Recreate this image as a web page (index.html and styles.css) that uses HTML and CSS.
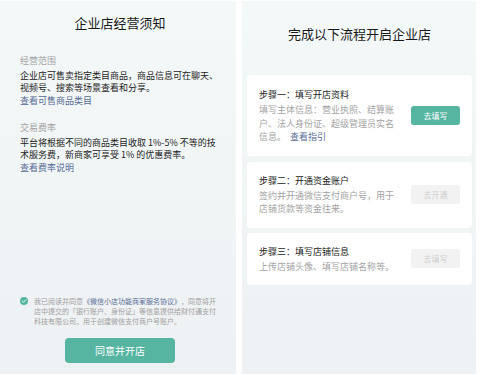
FILE: index.html
```html
<!DOCTYPE html>
<html lang="zh-CN">
<head>
  <meta charset="UTF-8" />
  <title>企业店</title>
  <link rel="stylesheet" href="styles.css">
</head>
<body>

<div class="screens">
  <div class="screen notice">
    <h1 class="screen-title">企业店经营须知</h1>

    <div class="section">
      <div class="section-label">经营范围</div>
      <p class="section-text">企业店可售卖指定类目商品，商品信息可在聊天、视频号、搜索等场景查看和分享。</p>
      <a class="link">查看可售商品类目</a>
    </div>

    <div class="section">
      <div class="section-label">交易费率</div>
      <p class="section-text">平台将根据不同的商品类目收取 1%-5% 不等的技术服务费，新商家可享受 1% 的优惠费率。</p>
      <a class="link">查看费率说明</a>
    </div>

    <div class="agree">
      <span class="check">
        <svg viewBox="0 0 10 10" width="8" height="8">
          <circle cx="5" cy="5" r="5" fill="#55b5a1" />
          <path d="M2.8 5.1 L4.4 6.6 L7.3 3.6" fill="none" stroke="#fff" stroke-width="1.1" stroke-linecap="round" stroke-linejoin="round" />
        </svg>
      </span>
      <p class="agree-text">我已阅读并同意<a class="link">《微信小店功能商家服务协议》</a>，同意将开店中提交的「银行账户、身份证」等信息提供给财付通支付科技有限公司，用于创建微信支付商户号账户。</p>
    </div>

    <button class="main-button">同意并开店</button>
  </div>

  <div class="screen steps">
    <h1 class="screen-title">完成以下流程开启企业店</h1>

    <div class="step-card">
      <div class="step-info">
        <div class="step-title">步骤一：填写开店资料</div>
        <p class="step-desc">填写主体信息：营业执照、结算账户、法人身份证、超级管理员实名信息。<a class="link guide">查看指引</a></p>
      </div>
      <button class="step-button">去填写</button>
    </div>

    <div class="step-card">
      <div class="step-info">
        <div class="step-title">步骤二：开通资金账户</div>
        <p class="step-desc">签约并开通微信支付商户号，用于店铺货款等资金往来。</p>
      </div>
      <button class="step-button disabled">去开通</button>
    </div>

    <div class="step-card">
      <div class="step-info">
        <div class="step-title">步骤三：填写店铺信息</div>
        <p class="step-desc">上传店铺头像、填写店铺名称等。</p>
      </div>
      <button class="step-button disabled">去填写</button>
    </div>
  </div>
</div>

</body>
</html>
```

FILE: styles.css
```css
* {
  margin: 0;
  padding: 0;
  box-sizing: border-box;
  font-family: "Noto Sans CJK SC", "Noto Sans", sans-serif;
  text-spacing-trim: space-all;
}

html, body {
  height: 100%;
  background: #fff;
  overflow: hidden;
}

.screens {
  display: flex;
  gap: 6px;
  padding-top: 1px;
}

.screen {
  height: 373px;
  background: linear-gradient(to bottom, #f3f8f8, #eef1f3);
  display: flex;
  flex-direction: column;
}

.screen-title {
  font-size: 13px;
  line-height: 18px;
  font-weight: 400;
  color: #191919;
  text-align: center;
}

.link {
  color: #576b95;
  text-decoration: none;
}

/* 左侧：经营须知 */
.notice {
  width: 236px;
  padding: 13px 16px 11px 20px;
}

.section {
  font-size: 9px;
  line-height: 12.5px;
  margin-top: 23px;
}

.section + .section {
  margin-top: 15px;
}

.section-label {
  color: #a3a3a3;
  margin-bottom: 2px;
}

.section-text {
  color: #222;
}

.agree {
  margin-top: auto;
  display: flex;
  gap: 6px;
  padding-right: 3px;
}

.check {
  flex: none;
  display: flex;
  height: 10px;
  align-items: center;
}

.agree-text {
  font-size: 7px;
  line-height: 10px;
  color: #a0a0a0;
}

.main-button {
  align-self: center;
  margin-top: 12px;
  width: 110px;
  height: 25px;
  border: none;
  border-radius: 4px;
  background: #55b5a1;
  color: #fff;
  font-size: 10px;
}

/* 右侧：开店流程 */
.steps {
  width: 234px;
  padding: 24px 4px 0 5px;
}

.steps .screen-title {
  margin-bottom: 32px;
}

.step-card {
  background: #fff;
  border-radius: 4px;
  padding: 12px 12px;
  display: flex;
  align-items: center;
  gap: 10px;
  margin-bottom: 5px;
}

.step-card:first-of-type {
  padding-top: 13px;
  margin-bottom: 6px;
}

.step-info {
  flex: 1;
}

.step-title {
  font-size: 9px;
  line-height: 13px;
  font-weight: 400;
  color: #1a1a1a;
  margin-bottom: 2px;
}

.step-desc {
  font-size: 9px;
  line-height: 13.5px;
  color: #a3a3a3;
}

.guide {
  margin-left: 4px;
}

.step-button {
  flex: none;
  width: 49px;
  height: 19px;
  border: none;
  border-radius: 3px;
  background: #55b5a1;
  color: #fff;
  font-size: 8px;
}

.step-button.disabled {
  background: #f2f2f2;
  color: #cfcfcf;
}
```
